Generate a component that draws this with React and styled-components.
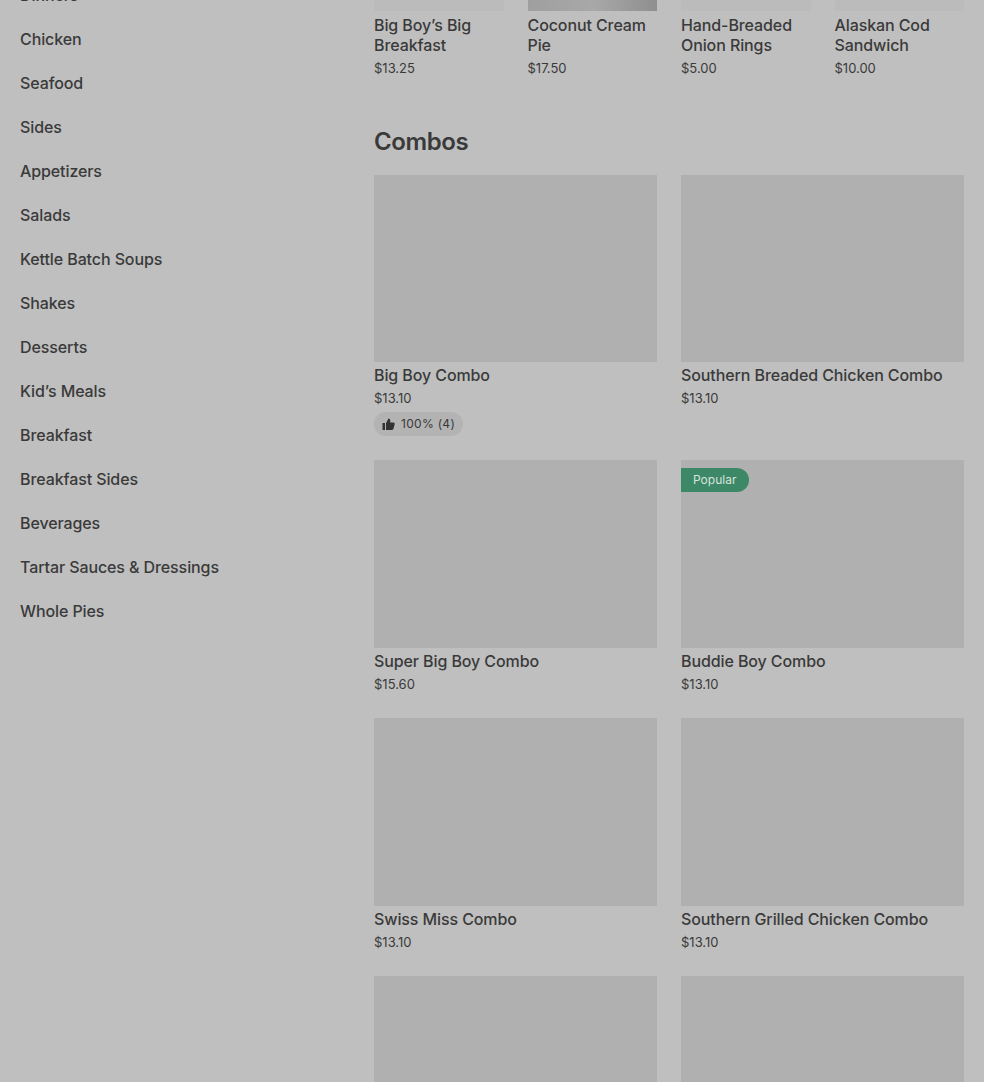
import React from 'react';
import styled, { createGlobalStyle } from 'styled-components';

const GlobalStyle = createGlobalStyle`
  html, body {
    margin: 0;
    height: 1082px;
    overflow: hidden;
    background: #bfbfbf;
  }
  body {
    color: #3a3a3a;
    font-family: 'Inter', 'Liberation Sans', sans-serif;
  }
`;

const Page = styled.div`
  display: grid;
  grid-template-columns: 354px 590px;
  padding: 0 20px;
  margin-top: -27px;
`;

const Sidebar = styled.nav`
  display: flex;
  flex-direction: column;
`;

const NavItem = styled.a`
  height: 44px;
  line-height: 44px;
  font-size: 16px;
  font-weight: 500;
  letter-spacing: -0.1px;
`;

const Main = styled.main`
  min-width: 0;
`;

const Row4 = styled.div`
  display: grid;
  grid-template-columns: repeat(4, 1fr);
  gap: 24px;
`;

const Grid2 = styled.div`
  display: grid;
  grid-template-columns: repeat(2, 1fr);
  gap: 24.6px 24px;
`;

const SmallThumb = styled.div`
  height: 38px;
  margin-bottom: 4px;
  background: ${({ $dark }) => ($dark ? 'linear-gradient(90deg, #9f9f9f, #a8a8a8 50%, #8f8f8f)' : '#bbb')};
`;

const Thumb = styled.div`
  position: relative;
  height: 187.4px;
  margin-bottom: 3px;
  background: #b0b0b0;
`;

const Badge = styled.span`
  position: absolute;
  top: 8px;
  left: 0;
  height: 24px;
  line-height: 24px;
  padding: 0 13px 0 12px;
  border-radius: 0 12px 12px 0;
  background: #3d8866;
  color: #d6e4dc;
  font-size: 12px;
`;

const Name = styled.div`
  font-size: 16px;
  line-height: 20px;
  font-weight: 500;
  letter-spacing: -0.1px;
`;

const Price = styled.div`
  margin-top: 3px;
  font-size: 13px;
  line-height: 20px;
`;

const Rating = styled.div`
  display: inline-flex;
  align-items: center;
  gap: 6px;
  height: 24px;
  margin-top: 3.5px;
  padding: 0 8px;
  border-radius: 12px;
  background: #b3b3b3;
  font-size: 12px;
  letter-spacing: 0.3px;
`;

const Heading = styled.h2`
  margin: 48px 0 16.7px;
  font-size: 24px;
  line-height: 32px;
  font-weight: 600;
  letter-spacing: -0.4px;
`;

const ThumbIcon = () => (
  <svg width="13" height="12" viewBox="0 0 13 12" fill="#333">
    <rect x="0.5" y="5" width="2.5" height="7" />
    <path d="M4 5.2 6.4 0.4c1 0 1.8.7 1.8 1.8V4.4h3.2c.9 0 1.5.8 1.3 1.6l-1.2 4.8c-.2.7-.8 1.2-1.5 1.2H4z" />
  </svg>
);

const categories = [
  'Dinners',
  'Chicken',
  'Seafood',
  'Sides',
  'Appetizers',
  'Salads',
  'Kettle Batch Soups',
  'Shakes',
  'Desserts',
  'Kid’s Meals',
  'Breakfast',
  'Breakfast Sides',
  'Beverages',
  'Tartar Sauces & Dressings',
  'Whole Pies',
];

const featured = [
  { name: 'Big Boy’s Big Breakfast', price: '$13.25' },
  { name: 'Coconut Cream Pie', price: '$17.50', dark: true },
  { name: 'Hand-Breaded Onion Rings', price: '$5.00' },
  { name: 'Alaskan Cod Sandwich', price: '$10.00' },
];

// the last two are cut off by the bottom of the window, only their pictures show
const combos = [
  { name: 'Big Boy Combo', price: '$13.10', rating: '100% (4)' },
  { name: 'Southern Breaded Chicken Combo', price: '$13.10' },
  { name: 'Super Big Boy Combo', price: '$15.60' },
  { name: 'Buddie Boy Combo', price: '$13.10', popular: true },
  { name: 'Swiss Miss Combo', price: '$13.10' },
  { name: 'Southern Grilled Chicken Combo', price: '$13.10' },
  {},
  {},
];

const App = () => (
  <>
    <GlobalStyle />
    <Page>
      <Sidebar>
        {categories.map((c) => (
          <NavItem key={c}>{c}</NavItem>
        ))}
      </Sidebar>
      <Main>
        <Row4>
          {featured.map((f) => (
            <div key={f.name}>
              <SmallThumb $dark={f.dark} />
              <Name>{f.name}</Name>
              <Price>{f.price}</Price>
            </div>
          ))}
        </Row4>
        <Heading>Combos</Heading>
        <Grid2>
          {combos.map((c, i) => (
            <div key={i}>
              <Thumb>{c.popular && <Badge>Popular</Badge>}</Thumb>
              {c.name && <Name>{c.name}</Name>}
              {c.price && <Price>{c.price}</Price>}
              {c.rating && (
                <Rating>
                  <ThumbIcon />
                  {c.rating}
                </Rating>
              )}
            </div>
          ))}
        </Grid2>
      </Main>
    </Page>
  </>
);

export default App;
